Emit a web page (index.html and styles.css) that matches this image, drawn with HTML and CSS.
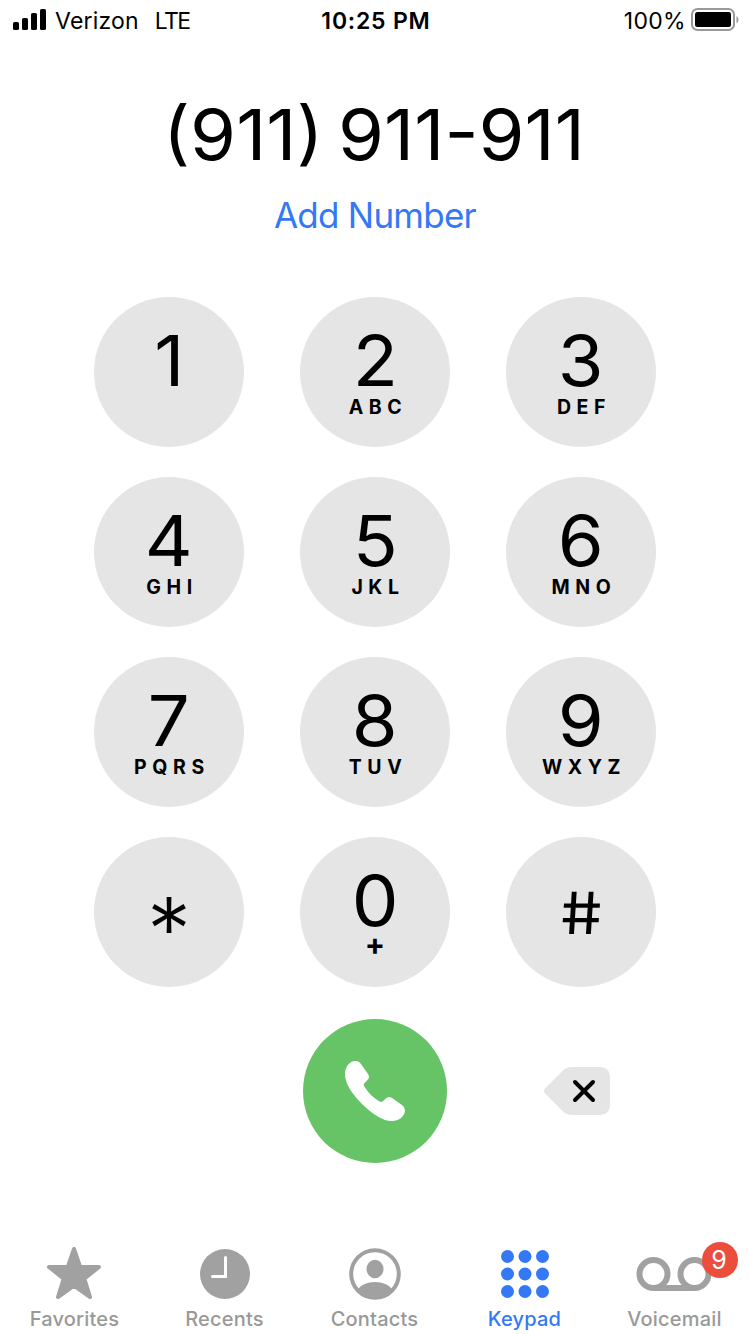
FILE: index.html
```html
<!DOCTYPE html>
<html lang="en">
<head>
<meta charset="utf-8">
<title>Phone</title>
<link rel="stylesheet" href="styles.css">
</head>
<body>
<div class="screen">
  <header class="status">
    <div class="status-left">
      <svg class="signal" width="33" height="21" viewBox="0 0 33 21"><rect x="0" y="13" width="6" height="8" rx="1.6"/><rect x="9" y="9" width="6" height="12" rx="1.6"/><rect x="18" y="4" width="6" height="17" rx="1.6"/><rect x="27" y="0" width="6" height="21" rx="1.6"/></svg>
      <span class="carrier">Verizon</span>
      <span class="network">LTE</span>
    </div>
    <div class="clock">10:25 PM</div>
    <div class="status-right">
      <span class="percent">100%</span>
      <svg class="battery" width="48" height="24" viewBox="0 0 48 24"><rect x="1" y="1" width="42" height="21" rx="5.5" fill="none" stroke="#999" stroke-width="2"/><rect x="4" y="4" width="36" height="15" rx="2.5"/><path d="M45.5 8v7.500q2-1 2-3.750t-2-3.750z" fill="#999"/></svg>
    </div>
  </header>

  <section class="entry">
    <div class="number">(911) 911-911</div>
    <a class="add">Add Number</a>
  </section>

  <main class="keypad">
    <div class="key"><span class="digit">1</span></div>
    <div class="key"><span class="digit">2</span><span class="letters">ABC</span></div>
    <div class="key"><span class="digit">3</span><span class="letters">DEF</span></div>
    <div class="key"><span class="digit">4</span><span class="letters">GHI</span></div>
    <div class="key"><span class="digit">5</span><span class="letters">JKL</span></div>
    <div class="key"><span class="digit">6</span><span class="letters">MNO</span></div>
    <div class="key"><span class="digit">7</span><span class="letters">PQRS</span></div>
    <div class="key"><span class="digit">8</span><span class="letters">TUV</span></div>
    <div class="key"><span class="digit">9</span><span class="letters">WXYZ</span></div>
    <div class="key"><span class="star">*</span></div>
    <div class="key"><span class="digit">0</span><span class="plus">+</span></div>
    <div class="key"><span class="hash">#</span></div>
  </main>

  <section class="actions">
    <div class="call">
      <svg width="60" height="60" viewBox="0 0 60 60"><path fill="#fff" d="M10.500 0C13 0 14.500 1 16 3L23 13Q25 16 23 18.500L19.500 22Q18 23.500 19 25C23 31.500 28.500 37 34.500 40.500Q36.500 41.500 38 40L41.500 37Q44 35 47 37L57 44Q60 46 60 49C60 55.500 54 60 46.500 60C38.500 60 28 54 16.500 42.500C6 31.500 0 22 0 13C0 6.500 4 0 10.500 0Z"/></svg>
    </div>
    <svg class="delete" width="66" height="48" viewBox="0 0 66 48"><path fill="#e5e5e5" d="M1 21.500L18.500 4Q22.500 0 28 0H55Q66 0 66 11V37Q66 48 55 48H28Q22.500 48 18.500 44L1 26.500Q-1 24 1 21.500Z"/><path d="M31 15L49 33M49 15L31 33" fill="none" stroke="#000" stroke-width="4" stroke-linecap="round"/></svg>
  </section>

  <nav class="tabs">
    <div class="tab"><div class="icon favorites">
      <svg width="54" height="52" viewBox="0 0 54 52"><path fill="#a1a1a1" stroke="#a1a1a1" stroke-width="4" stroke-linejoin="round" d="M27 2L33.200 20H52L37.300 31.600L43 50L27 38.700L11 50L16.700 31.600L2 20H20.800Z"/></svg>
    </div><span class="label">Favorites</span></div>
    <div class="tab"><div class="icon shifted">
      <svg width="50" height="50" viewBox="0 0 50 50"><circle cx="25" cy="25" r="25" fill="#a1a1a1"/><path d="M25.500 8.500V27.500H12.500" fill="none" stroke="#fff" stroke-width="3" stroke-linecap="round"/></svg>
    </div><span class="label">Recents</span></div>
    <div class="tab"><div class="icon shifted">
      <svg width="52" height="52" viewBox="0 0 52 52"><circle cx="26" cy="26" r="23.800" fill="none" stroke="#a1a1a1" stroke-width="4"/><ellipse cx="26" cy="21" rx="8.500" ry="9.300" fill="#a1a1a1"/><path fill="#a1a1a1" d="M8.500 41.500Q14 34 26 34T43.500 41.500Q36.500 50 26 50T8.500 41.500Z"/></svg>
    </div><span class="label">Contacts</span></div>
    <div class="tab active"><div class="icon shifted">
      <svg width="48" height="48" viewBox="0 0 48 48" fill="#3478f6"><circle cx="6.500" cy="6.500" r="6.500"/><circle cx="24" cy="6.500" r="6.500"/><circle cx="41.500" cy="6.500" r="6.500"/><circle cx="6.500" cy="24" r="6.500"/><circle cx="24" cy="24" r="6.500"/><circle cx="41.500" cy="24" r="6.500"/><circle cx="6.500" cy="41.500" r="6.500"/><circle cx="24" cy="41.500" r="6.500"/><circle cx="41.500" cy="41.500" r="6.500"/></svg>
    </div><span class="label">Keypad</span></div>
    <div class="tab"><div class="icon">
      <svg width="76" height="34" viewBox="0 0 76 34" fill="none" stroke="#a1a1a1" stroke-width="6"><circle cx="17.500" cy="17" r="14"/><circle cx="58.500" cy="17" r="14"/><path d="M17.500 31H58.500"/></svg>
      <span class="badge">9</span>
    </div><span class="label">Voicemail</span></div>
  </nav>
</div>
</body>
</html>
```
FILE: styles.css
```css
* { box-sizing: border-box; }
body { margin: 0; background: #fff; }
.screen {
  width: 750px;
  height: 1334px;
  display: flex;
  flex-direction: column;
  overflow: hidden;
  background: #fff;
  color: #000;
  font-family: Inter, "Liberation Sans", sans-serif;
}
svg { display: block; flex: none; }

.status {
  height: 42px;
  flex: none;
  padding: 0 11px 0 13px;
  display: grid;
  grid-template-columns: 1fr auto 1fr;
  align-items: center;
  font-size: 23px;
  line-height: 42px;
  white-space: nowrap;
}
.status-left, .status-right { display: flex; align-items: center; }
.status-right { justify-content: flex-end; }
.signal { margin-bottom: 3px; }
.battery { margin-bottom: 2px; }
.carrier { margin-left: 9px; letter-spacing: 0.2px; }
.network { margin-left: 16px; letter-spacing: -1.6px; }
.clock { font-weight: 600; letter-spacing: 0.8px; }
.percent { margin-right: 5px; letter-spacing: 0.3px; }

.entry {
  height: 255px;
  padding-top: 53px;
  flex: none;
  display: flex;
  flex-direction: column;
  align-items: center;
}
.number {
  margin-right: 2px;
  font-size: 70px;
  line-height: 80px;
  word-spacing: -6px;
  white-space: nowrap;
  transform: scaleX(1.06);
}
.add {
  margin-top: 20px;
  font-size: 35px;
  line-height: 40px;
  letter-spacing: -0.75px;
  color: #3478f6;
  white-space: nowrap;
}

.keypad {
  display: grid;
  grid-template-columns: repeat(3, 150px);
  grid-auto-rows: 150px;
  gap: 30px 56px;
  justify-content: center;
}
.key {
  padding-top: 29px;
  display: flex;
  flex-direction: column;
  align-items: center;
  border-radius: 50%;
  background: #e5e5e5;
}
.digit { font-size: 70px; line-height: 70px; transform: scaleX(1.06); }
.letters {
  margin-top: 1px;
  padding-left: 6px;
  font-size: 19.500px;
  line-height: 20px;
  font-weight: 700;
  letter-spacing: 5.600px;
}
.plus { margin-top: -2px; font-size: 30px; line-height: 20px; font-weight: 700; }
.star { font-size: 88px; line-height: 126px; font-weight: 350; }
.hash { font-size: 58px; line-height: 95px; font-weight: 440; transform: skewX(7deg) scaleX(1.14); }

.actions {
  margin-top: 32px;
  height: 144px;
  padding: 0 140px 0 303px;
  display: flex;
  align-items: center;
  justify-content: space-between;
}
.call {
  width: 144px;
  height: 144px;
  display: flex;
  align-items: center;
  justify-content: center;
  border-radius: 50%;
  background: #66c466;
}

.tabs {
  margin-top: auto;
  height: 94px;
  display: grid;
  grid-template-columns: repeat(5, 150px);
  margin-left: -1px;
}
.tab { display: flex; flex-direction: column; align-items: center; color: #999; }
.icon { position: relative; height: 68px; display: flex; align-items: center; }
.shifted { padding-left: 2px; }
.favorites { padding-bottom: 3px; }
.label { padding-left: 1px; font-size: 20px; line-height: 22px; font-weight: 500; letter-spacing: 0.2px; }
.active { color: #3478f6; }
.badge {
  position: absolute;
  left: 66px;
  top: 2px;
  width: 36px;
  height: 36px;
  padding-right: 2px;
  border-radius: 50%;
  background: #eb4e3d;
  color: #fff;
  font-size: 25px;
  line-height: 36px;
  text-align: center;
}
```
